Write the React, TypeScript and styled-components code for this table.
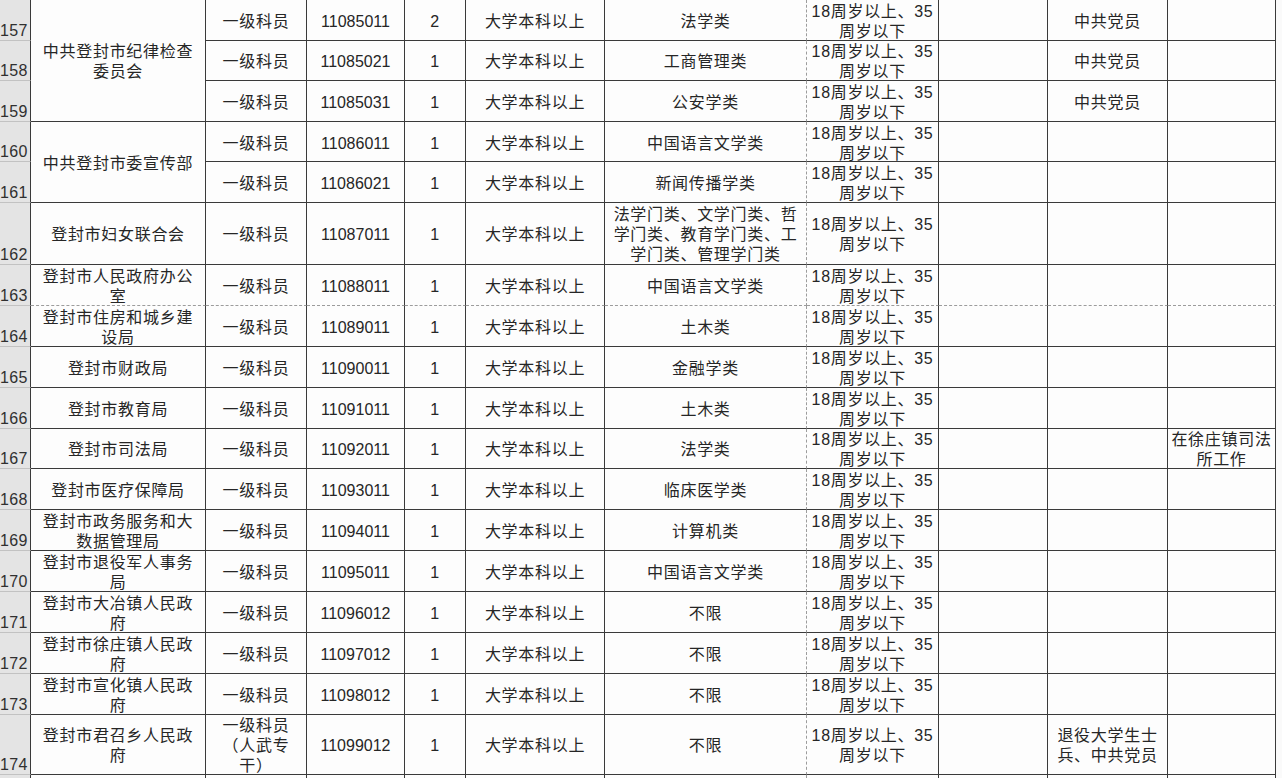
import React from "react";
import styled, { createGlobalStyle } from "styled-components";

const GlobalStyle = createGlobalStyle`
  html, body {
    margin: 0;
    padding: 0;
    background: #fafafa;
    overflow: hidden;
  }
  body {
    font-family: "Liberation Sans", "Noto Sans CJK SC", sans-serif;
  }
`;

const AGE = "18周岁以上、35\n周岁以下";
const EDU = "大学本科以上";
const POS = "一级科员";

type Row = {
  n: number;
  h: number;
  label?: string;
  org?: string;
  span?: number;
  pos?: string;
  code?: string;
  count?: string;
  edu?: string;
  major?: string;
  age?: string;
  party?: string;
  note?: string;
  dashed?: boolean;
};

const base = { pos: POS, count: "1", edu: EDU, age: AGE };

const rows: Row[] = [
  { ...base, n: 157, h: 40.6, org: "中共登封市纪律检查\n委员会", span: 3, code: "11085011", count: "2", major: "法学类", party: "中共党员" },
  { ...base, n: 158, h: 40.6, code: "11085021", major: "工商管理类", party: "中共党员" },
  { ...base, n: 159, h: 40.6, code: "11085031", major: "公安学类", party: "中共党员" },
  { ...base, n: 160, h: 40.6, org: "中共登封市委宣传部", span: 2, code: "11086011", major: "中国语言文学类" },
  { ...base, n: 161, h: 40.6, code: "11086021", major: "新闻传播学类" },
  { ...base, n: 162, h: 62, org: "登封市妇女联合会", code: "11087011", major: "法学门类、文学门类、哲\n学门类、教育学门类、工\n学门类、管理学门类" },
  { ...base, n: 163, h: 40.9, org: "登封市人民政府办公\n室", code: "11088011", major: "中国语言文学类", dashed: true },
  { ...base, n: 164, h: 40.9, org: "登封市住房和城乡建\n设局", code: "11089011", major: "土木类" },
  { ...base, n: 165, h: 40.9, org: "登封市财政局", code: "11090011", major: "金融学类" },
  { ...base, n: 166, h: 40.9, org: "登封市教育局", code: "11091011", major: "土木类" },
  { ...base, n: 167, h: 40.9, org: "登封市司法局", code: "11092011", major: "法学类", note: "在徐庄镇司法\n所工作" },
  { ...base, n: 168, h: 40.9, org: "登封市医疗保障局", code: "11093011", major: "临床医学类" },
  { ...base, n: 169, h: 40.9, org: "登封市政务服务和大\n数据管理局", code: "11094011", major: "计算机类" },
  { ...base, n: 170, h: 40.9, org: "登封市退役军人事务\n局", code: "11095011", major: "中国语言文学类" },
  { ...base, n: 171, h: 40.9, org: "登封市大冶镇人民政\n府", code: "11096012", major: "不限" },
  { ...base, n: 172, h: 40.9, org: "登封市徐庄镇人民政\n府", code: "11097012", major: "不限" },
  { ...base, n: 173, h: 40.9, org: "登封市宣化镇人民政\n府", code: "11098012", major: "不限" },
  { ...base, n: 174, h: 60, org: "登封市君召乡人民政\n府", pos: "一级科员\n（人武专\n干）", code: "11099012", major: "不限", party: "退役大学生士\n兵、中共党员" },
  // next row only peeks in at the bottom edge, its number is out of view
  { n: 175, h: 20, label: "", org: "" },
];

const Sheet = styled.div<{ $rows: string }>`
  display: grid;
  grid-template-columns: 31px 175px 101px 98px 61px 139px 202px 132px 109px 120px 108px;
  grid-template-rows: ${(p) => p.$rows};
  width: 1276px;
  color: #262626;
  font-size: 16px;
`;

const RowHead = styled.div`
  display: flex;
  align-items: flex-end;
  justify-content: flex-start;
  overflow: hidden;
  background: #e4e4e4;
  border-bottom: 1px solid #c2c2c2;
  border-right: 1px solid #3a3a3a;
  padding-bottom: 1px;
  font-size: 16px;
  line-height: 16px;
  letter-spacing: 0.4px;
  color: #303030;
`;

const Cell = styled.div<{ $span?: number; $dashRight?: boolean; $dashBottom?: boolean; $tight?: boolean }>`
  grid-row: span ${(p) => p.$span ?? 1};
  display: flex;
  align-items: center;
  justify-content: center;
  overflow: hidden;
  padding-top: 4px;
  text-align: center;
  white-space: pre;
  line-height: 20px;
  letter-spacing: ${(p) => (p.$tight ? "0" : "0.7px")};
  background: #fdfdfd;
  border-right: 1px ${(p) => (p.$dashRight ? "dashed #9c9c9c" : "solid #3a3a3a")};
  border-bottom: 1px ${(p) => (p.$dashBottom ? "dashed #9c9c9c" : "solid #3a3a3a")};
`;

export default function App() {
  const template = rows.map((r) => `${r.h}px`).join(" ");
  return (
    <>
      <GlobalStyle />
      <Sheet $rows={template}>
        {rows.map((r) => (
          <React.Fragment key={r.n}>
            <RowHead>{r.label ?? r.n}</RowHead>
            {r.org !== undefined && (
              <Cell $span={r.span} $dashBottom={r.dashed}>
                {r.org}
              </Cell>
            )}
            <Cell $dashBottom={r.dashed}>{r.pos}</Cell>
            <Cell $dashBottom={r.dashed} $tight>
              {r.code}
            </Cell>
            <Cell $dashBottom={r.dashed}>{r.count}</Cell>
            <Cell $dashBottom={r.dashed}>{r.edu}</Cell>
            <Cell $dashBottom={r.dashed} $dashRight>
              {r.major}
            </Cell>
            <Cell $dashBottom={r.dashed}>{r.age}</Cell>
            <Cell $dashBottom={r.dashed} />
            <Cell $dashBottom={r.dashed}>{r.party}</Cell>
            <Cell $dashBottom={r.dashed}>{r.note}</Cell>
          </React.Fragment>
        ))}
      </Sheet>
    </>
  );
}
